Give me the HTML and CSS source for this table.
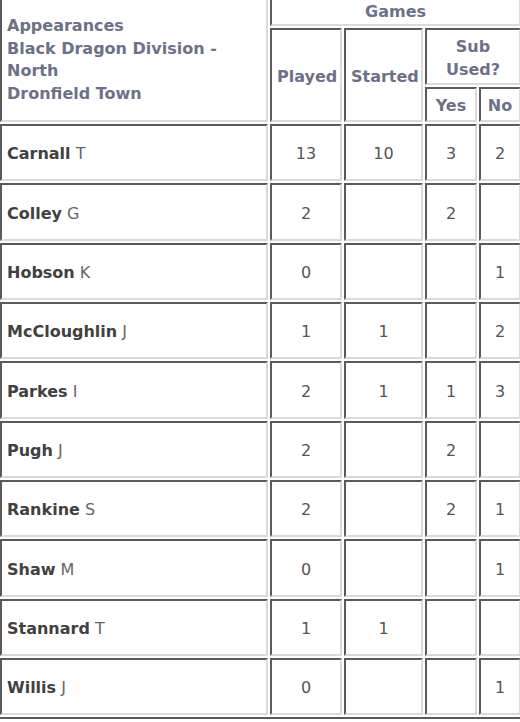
FILE: index.html
```html
<!DOCTYPE html>
<html>
<head>
<meta charset="utf-8">
<link rel="stylesheet" href="styles.css">
</head>
<body>
<table class="apps">
  <colgroup>
    <col class="c-name">
    <col class="c-played">
    <col class="c-started">
    <col class="c-yes">
    <col class="c-no">
  </colgroup>
  <thead>
    <tr class="h1">
      <th rowspan="3" class="title">Appearances<br>Black Dragon Division -<br>North<br>Dronfield Town</th>
      <th colspan="4">Games</th>
    </tr>
    <tr class="h2">
      <th rowspan="2">Played</th>
      <th rowspan="2">Started</th>
      <th colspan="2">Sub<br>Used?</th>
    </tr>
    <tr class="h3">
      <th>Yes</th>
      <th>No</th>
    </tr>
  </thead>
  <tbody>
    <tr><td class="name"><b>Carnall</b> T</td><td>13</td><td>10</td><td>3</td><td>2</td></tr>
    <tr><td class="name"><b>Colley</b> G</td><td>2</td><td></td><td>2</td><td></td></tr>
    <tr><td class="name"><b>Hobson</b> K</td><td>0</td><td></td><td></td><td>1</td></tr>
    <tr><td class="name"><b>McCloughlin</b> J</td><td>1</td><td>1</td><td></td><td>2</td></tr>
    <tr><td class="name"><b>Parkes</b> I</td><td>2</td><td>1</td><td>1</td><td>3</td></tr>
    <tr><td class="name"><b>Pugh</b> J</td><td>2</td><td></td><td>2</td><td></td></tr>
    <tr><td class="name"><b>Rankine</b> S</td><td>2</td><td></td><td>2</td><td>1</td></tr>
    <tr><td class="name"><b>Shaw</b> M</td><td>0</td><td></td><td></td><td>1</td></tr>
    <tr><td class="name"><b>Stannard</b> T</td><td>1</td><td>1</td><td></td><td></td></tr>
    <tr><td class="name"><b>Willis</b> J</td><td>0</td><td></td><td></td><td>1</td></tr>
  </tbody>
</table>
</body>
</html>
```

FILE: styles.css
```css
html, body {
  margin: 0;
  padding: 0;
  background: #ffffff;
  overflow: hidden;
}

.apps {
  margin: -10px 0 0 -4px;
  table-layout: fixed;
  width: 529px;
  border-collapse: separate;
  border-spacing: 2px;
  border-style: solid;
  border-width: 2px;
  border-color: #dadada #5a5a5a #5a5a5a #dadada;
  font-family: "DejaVu Sans", Verdana, sans-serif;
  font-size: 16px;
  line-height: 22.5px;
}

.c-name { width: 268px; }
.c-played { width: 72px; }
.c-started { width: 79px; }
.c-yes { width: 52px; }
.c-no { width: 42px; }

.apps th,
.apps td {
  box-sizing: border-box;
  border-style: solid;
  border-width: 2px;
  border-color: #5a5a5a #dadada #dadada #5a5a5a;
  padding: 4px 5px 0;
  vertical-align: middle;
  text-align: center;
}

.apps th {
  color: #6c7188;
  font-weight: bold;
}

.apps th.title {
  text-align: left;
}

.h1 { height: 32px; }
.h2 { height: 57px; }
.h3 { height: 35px; }

.apps tbody tr { height: 57.33px; }

.apps td {
  color: #555555;
  font-weight: normal;
}

.apps td.name {
  text-align: left;
  color: #666666;
}

.apps td.name b {
  color: #414141;
  font-weight: bold;
}
```
